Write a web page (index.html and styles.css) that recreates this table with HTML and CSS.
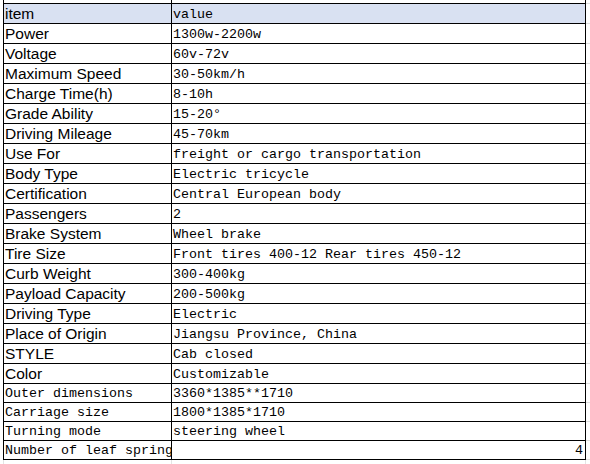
FILE: index.html
```html
<!DOCTYPE html>
<html>
<head>
<meta charset="utf-8">
<link rel="stylesheet" href="styles.css">
</head>
<body>
<table class="sheet">
<tr class="stub"><td class="k"></td><td class="v"></td><td class="g"></td></tr>
<tr class="r20 head"><td class="k sans">item</td><td class="v mono">value</td><td class="g"></td></tr>
<tr class="r20"><td class="k sans">Power</td><td class="v mono">1300w-2200w</td><td class="g"></td></tr>
<tr class="r20"><td class="k sans">Voltage</td><td class="v mono">60v-72v</td><td class="g"></td></tr>
<tr class="r20"><td class="k sans">Maximum Speed</td><td class="v mono">30-50km/h</td><td class="g"></td></tr>
<tr class="r20"><td class="k sans">Charge Time(h)</td><td class="v mono">8-10h</td><td class="g"></td></tr>
<tr class="r20"><td class="k sans">Grade Ability</td><td class="v mono">15-20°</td><td class="g"></td></tr>
<tr class="r20"><td class="k sans">Driving Mileage</td><td class="v mono">45-70km</td><td class="g"></td></tr>
<tr class="r20"><td class="k sans">Use For</td><td class="v mono">freight or cargo transportation</td><td class="g"></td></tr>
<tr class="r20"><td class="k sans">Body Type</td><td class="v mono">Electric tricycle</td><td class="g"></td></tr>
<tr class="r20"><td class="k sans">Certification</td><td class="v mono">Central European body</td><td class="g"></td></tr>
<tr class="r20"><td class="k sans">Passengers</td><td class="v mono">2</td><td class="g"></td></tr>
<tr class="r20"><td class="k sans">Brake System</td><td class="v mono">Wheel brake</td><td class="g"></td></tr>
<tr class="r20"><td class="k sans">Tire Size</td><td class="v mono">Front tires 400-12 Rear tires 450-12</td><td class="g"></td></tr>
<tr class="r20"><td class="k sans">Curb Weight</td><td class="v mono">300-400kg</td><td class="g"></td></tr>
<tr class="r20"><td class="k sans">Payload Capacity</td><td class="v mono">200-500kg</td><td class="g"></td></tr>
<tr class="r20"><td class="k sans">Driving Type</td><td class="v mono">Electric</td><td class="g"></td></tr>
<tr class="r20"><td class="k sans">Place of Origin</td><td class="v mono">Jiangsu Province, China</td><td class="g"></td></tr>
<tr class="r20"><td class="k sans">STYLE</td><td class="v mono">Cab closed</td><td class="g"></td></tr>
<tr class="r20"><td class="k sans">Color</td><td class="v mono">Customizable</td><td class="g"></td></tr>
<tr class="r19"><td class="k mono">Outer dimensions</td><td class="v mono">3360*1385**1710</td><td class="g"></td></tr>
<tr class="r19"><td class="k mono">Carriage size</td><td class="v mono">1800*1385*1710</td><td class="g"></td></tr>
<tr class="r19"><td class="k mono">Turning mode</td><td class="v mono">steering wheel</td><td class="g"></td></tr>
<tr class="r19"><td class="k mono">Number of leaf spring</td><td class="v mono num">4</td><td class="g"></td></tr>
<tr class="tail"><td class="k"></td><td class="v"></td><td class="g"></td></tr>
</table>
</body>
</html>
```

FILE: styles.css
```css
html, body {
  margin: 0;
  padding: 0;
  background: #ffffff;
  overflow: hidden;
}

.sheet {
  margin-left: 3px;
  border-collapse: separate;
  border-spacing: 0;
  table-layout: fixed;
  color: #000000;
}

.sheet td {
  padding: 0 0 0 1px;
  vertical-align: bottom;
  white-space: nowrap;
  overflow: hidden;
  box-sizing: border-box;
}

.sheet td.k {
  width: 169px;
  max-width: 169px;
  border-left: 1px solid #000;
  border-right: 1px solid #000;
  border-bottom: 1px solid #000;
}

.sheet td.v {
  width: 415px;
  max-width: 415px;
  border-right: 1px solid #000;
  border-bottom: 1px solid #000;
}

.sheet td.g {
  width: 4px;
  padding: 0;
  border-bottom: 1px solid #dedede;
}

.stub {
  height: 4px;
}

.r20 {
  height: 20px;
}

.r19 {
  height: 19px;
}

.head td.k,
.head td.v {
  background: #d9e1f2;
}

.sans {
  font-family: "Liberation Sans", Arial, sans-serif;
  font-size: 15.5px;
  line-height: 16px;
  padding-bottom: 1px !important;
}

.mono {
  font-family: "Liberation Mono", "Courier New", monospace;
  font-size: 13.33px;
  line-height: 16px;
}

.num {
  text-align: right;
  padding-right: 2px !important;
}

.tail {
  height: 5px;
}

.tail td.k {
  border-left: 1px solid #e4e4e4;
  border-right: 1px solid #e4e4e4;
  border-bottom: none;
}

.tail td.v {
  border-right: 1px solid #e4e4e4;
  border-bottom: none;
}

.tail td.g {
  border-bottom: none;
}
```
